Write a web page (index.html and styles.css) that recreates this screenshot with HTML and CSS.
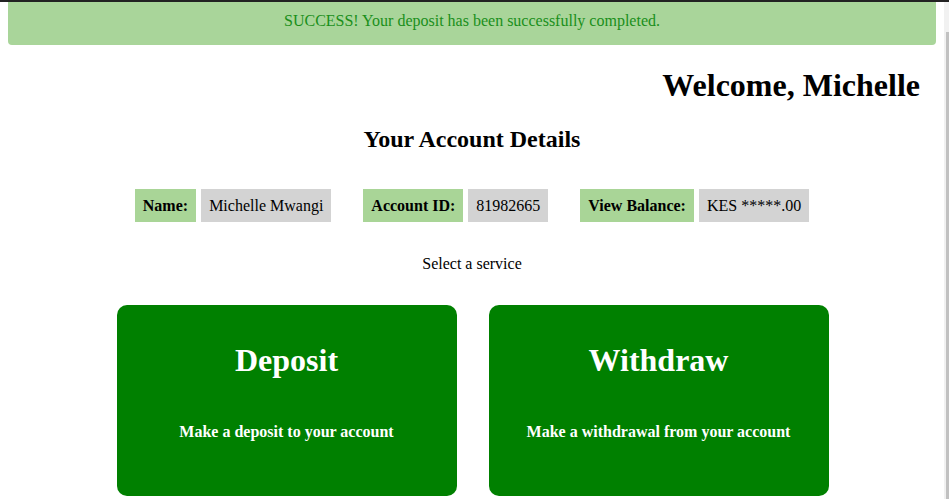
FILE: index.html
```html
<!DOCTYPE html>
<html>
<head>
<meta charset="utf-8">
<link rel="stylesheet" href="styles.css">
</head>
<body>
<div class="topbar"></div>
<div class="scrollbar"><div class="thumb"></div></div>
<main class="page">
  <div class="alert">SUCCESS! Your deposit has been successfully completed.</div>
  <h1 class="welcome">Welcome, Michelle</h1>
  <h2 class="details-title">Your Account Details</h2>
  <div class="info-row">
    <div class="info">
      <span class="label">Name:</span>
      <span class="value">Michelle Mwangi</span>
    </div>
    <div class="info">
      <span class="label">Account ID:</span>
      <span class="value">81982665</span>
    </div>
    <div class="info">
      <span class="label">View Balance:</span>
      <span class="value">KES *****.00</span>
    </div>
  </div>
  <p class="select">Select a service</p>
  <div class="services">
    <div class="card">
      <h1 class="card-title">Deposit</h1>
      <p class="card-text">Make a deposit to your account</p>
    </div>
    <div class="card">
      <h1 class="card-title">Withdraw</h1>
      <p class="card-text">Make a withdrawal from your account</p>
    </div>
  </div>
</main>
</body>
</html>
```
FILE: styles.css
```css
html, body {
  margin: 0;
  padding: 0;
  background: #ffffff;
}
body {
  font-family: "Liberation Serif", "Times New Roman", serif;
  font-size: 16px;
  color: #000;
}
.topbar {
  height: 2px;
  background: #222222;
}
.scrollbar {
  position: fixed;
  top: 2px;
  right: 0;
  width: 5px;
  bottom: 0;
  background: #f1f1f1;
}
.thumb {
  margin-top: 30px;
  margin-left: 2px;
  width: 3px;
  height: 600px;
  background: #c1c1c1;
}
.page {
  margin: 0 13px 0 8px;
}
.alert {
  background: #a9d59a;
  color: #1a8f1a;
  text-align: center;
  padding: 9px 0 15px;
  line-height: 19px;
  border-radius: 0 0 4px 4px;
}
.welcome {
  font-size: 32px;
  text-align: right;
  margin: 22px 16px 0 0;
  line-height: 37px;
}
.details-title {
  font-size: 24px;
  text-align: center;
  margin: 21px 0 0;
  line-height: 28px;
}
.info-row {
  display: flex;
  justify-content: center;
  gap: 32px;
  margin-top: 36px;
}
.info {
  display: flex;
  gap: 5px;
}
.label, .value {
  padding: 7px 8px;
  line-height: 19px;
}
.label {
  background: #a9d597;
  font-weight: bold;
}
.value {
  background: #d3d3d3;
}
.select {
  text-align: center;
  margin: 32px 0 0;
  line-height: 19px;
}
.services {
  display: flex;
  justify-content: center;
  gap: 32px;
  margin-top: 32px;
  padding-left: 1px;
}
.card {
  width: 340px;
  height: 191px;
  background: #008000;
  color: #ffffff;
  border-radius: 10px;
  text-align: center;
  box-sizing: border-box;
  padding-top: 37px;
}
.card-title {
  font-size: 32px;
  line-height: 37px;
  margin: 0;
}
.card-text {
  font-weight: bold;
  margin: 43px 0 0;
  line-height: 19px;
}
```
